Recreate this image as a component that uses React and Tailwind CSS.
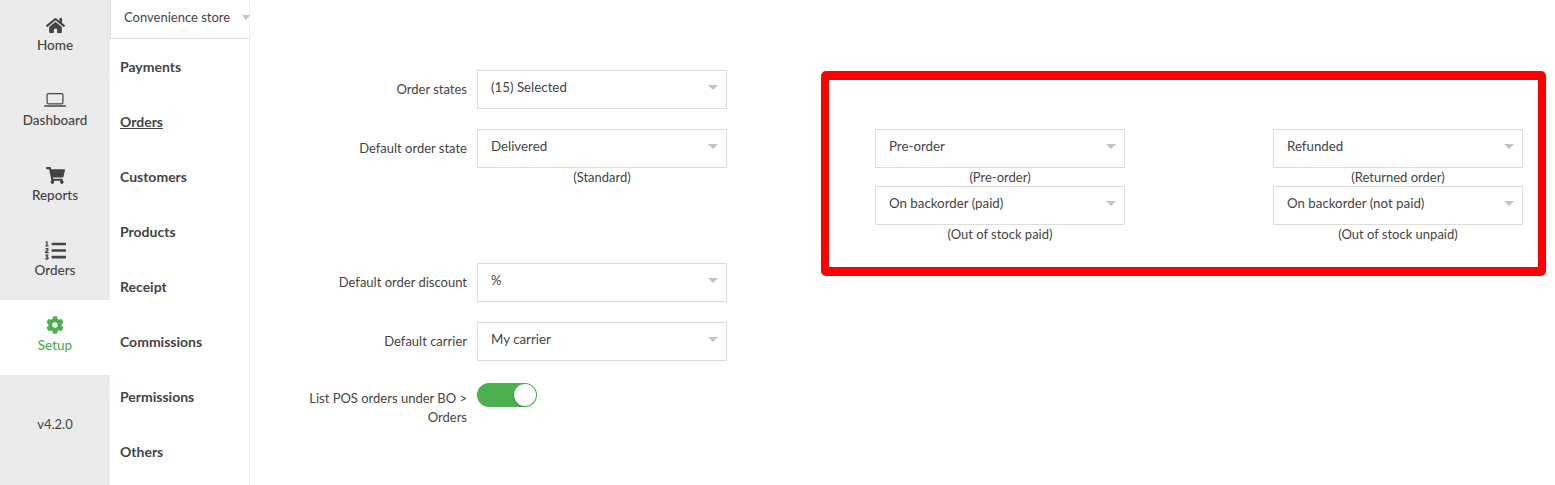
import React from "react";
import { FaHome, FaShoppingCart, FaListOl, FaCog } from "react-icons/fa";

const Laptop = () => (
  <svg width="22" height="14" viewBox="0 0 22 14" fill="none" className="text-[#444]">
    <rect x="3.1" y="0.6" width="15.8" height="10.3" rx="1.2" stroke="currentColor" strokeWidth="1.2" />
    <rect x="0" y="12.2" width="22" height="1.6" rx="0.7" fill="currentColor" />
  </svg>
);

const Caret = () => <span className="absolute right-[8px] top-[14px] w-0 h-0 border-x-[5px] border-x-transparent border-t-[5px] border-t-[#c4c4c4]" />;

const Select = ({ value, caption, className = "" }) => (
  <div className={`w-[250px] ${className}`}>
    <div className="relative h-[39px] border border-[#ddd] bg-white pl-[13px] pt-[6px] leading-[20px] text-[13.3px]">
      {value}
      <Caret />
    </div>
    {caption && <div className="text-center leading-[18px] pt-0">{caption}</div>}
  </div>
);

const Row = ({ label, className = "", labelClassName = "pt-[9px] leading-[20px]", children }) => (
  <div className={`flex ${className}`}>
    <div className={`w-[217px] pl-[40px] mr-[10px] text-right ${labelClassName}`}>{label}</div>
    {children}
  </div>
);

const NavItem = ({ icon, label, active }) => (
  <div className={`h-[75px] flex flex-col items-center pt-[15px] ${active ? "bg-white text-[#4caf50]" : "text-[#444]"}`}>
    <div className="h-[20px] flex items-center justify-center">{icon}</div>
    <div className="leading-[20px] text-[13.5px] font-medium">{label}</div>
  </div>
);

const menu = ["Payments", "Orders", "Customers", "Products", "Receipt", "Commissions", "Permissions", "Others"];

export default function App() {
  return (
    <div className="flex w-[1555px] h-[485px] overflow-hidden bg-white text-[13px] text-[#444] font-['Lato','Carlito','Open_Sans',sans-serif]">
      <div className="w-[110px] shrink-0 bg-[#ebebeb] flex flex-col">
        <NavItem icon={<FaHome size={19} />} label="Home" />
        <NavItem icon={<Laptop />} label="Dashboard" />
        <NavItem icon={<FaShoppingCart size={19} />} label="Reports" />
        <NavItem icon={<FaListOl size={21} />} label="Orders" />
        <NavItem active icon={<FaCog size={18} />} label="Setup" />
        <div className="flex-1 flex items-center justify-center pb-[10px]">v4.2.0</div>
      </div>
      <div className="w-[140px] shrink-0 border-r border-[#eee] flex flex-col">
        <div className="relative h-[39px] border-l border-b border-[#ddd] pl-[13px] pt-[7px] leading-[20px]">
          Convenience store
          <span className="absolute right-[-1px] top-[15px] w-0 h-0 border-x-[4.5px] border-x-transparent border-t-[5px] border-t-[#c4c4c4]" />
        </div>
        {menu.map((m) => (
          <div key={m} className={`h-[55px] pl-[10px] pt-[18px] leading-[20px] text-[14px] font-bold text-[#444] ${m === "Orders" ? "underline" : ""}`}>{m}</div>
        ))}
      </div>
      <div className="w-[571px] shrink-0 pt-[70px]">
        <Row label="Order states"><Select value="(15) Selected" /></Row>
        <Row label="Default order state" className="mt-[20px]"><Select value="Delivered" caption="(Standard)" /></Row>
        <Row label="Default order discount" className="mt-[77px]"><Select value="%" /></Row>
        <Row label="Default carrier" className="mt-[20px]"><Select value="My carrier" /></Row>
        <Row label="List POS orders under BO > Orders" className="mt-[22px]" labelClassName="pt-[6px] leading-[19px]">
          <div className="relative w-[60px] h-[24px] rounded-full bg-[#4caf50]">
            <span className="absolute right-[1px] top-[1px] w-[22px] h-[22px] rounded-full bg-white shadow-sm" />
          </div>
        </Row>
      </div>
      <div className="mt-[71px] w-[725px] h-[205px] border-x-[8px] border-y-[9px] border-[#ff0000] rounded-[5px] pt-[49px] pl-[46px]">
        <div className="grid grid-cols-[250px_250px] gap-x-[148px]">
          <Select value="Pre-order" caption="(Pre-order)" />
          <Select value="Refunded" caption="(Returned order)" />
          <Select value="On backorder (paid)" caption="(Out of stock paid)" />
          <Select value="On backorder (not paid)" caption="(Out of stock unpaid)" />
        </div>
      </div>
    </div>
  );
}
